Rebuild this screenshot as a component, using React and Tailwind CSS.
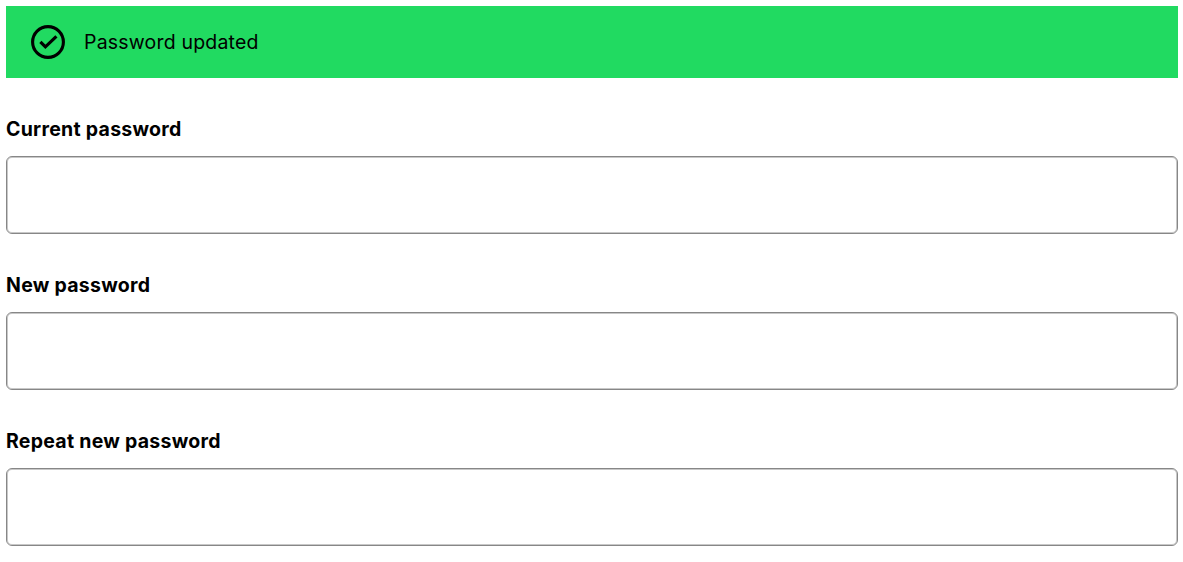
import { useState } from 'react';

const FIELDS = [
  { id: 'current', label: 'Current password' },
  { id: 'new', label: 'New password' },
  { id: 'repeat', label: 'Repeat new password' },
];

function CheckCircleIcon() {
  return (
    <svg width="34" height="34" viewBox="0 0 34 34" fill="none" stroke="black" className="shrink-0">
      <circle cx="17" cy="17" r="15.4" strokeWidth="3.1" />
      <path d="M9.4 16.8l5 5L25.4 11.4" strokeWidth="3.2" />
    </svg>
  );
}

function PasswordField({ id, label, value, onChange }) {
  return (
    <div className="flex flex-col">
      <label htmlFor={id} className="mb-[13px] text-[19.5px] leading-7 font-bold tracking-[0.27px]">
        {label}
      </label>
      <input
        id={id}
        type="password"
        value={value}
        onChange={(e) => onChange(id, e.target.value)}
        className="h-[78px] w-full rounded-md border border-[#878787] bg-white px-5 text-xl inset-shadow-[0_0_0_1px_#c8c8c8] outline-none"
      />
    </div>
  );
}

export default function App() {
  const [values, setValues] = useState({ current: '', new: '', repeat: '' });

  function handleChange(id, value) {
    setValues((prev) => ({ ...prev, [id]: value }));
  }

  return (
    <main className="h-[562px] bg-white pt-1.5 pr-[5px] pl-1.5 font-['Inter',sans-serif] text-black">
      {/* Success banner */}
      <div className="flex h-[72px] items-center gap-[19px] bg-[#21da61] pl-[25px]" role="status">
        <CheckCircleIcon />
        <span className="text-[19.5px] leading-7 tracking-[0.19px]">Password updated</span>
      </div>

      {/* Form */}
      <form className="mt-[37px] flex flex-col gap-[37px]">
        {FIELDS.map((field) => (
          <PasswordField
            key={field.id}
            {...field}
            value={values[field.id]}
            onChange={handleChange}
          />
        ))}
      </form>
    </main>
  );
}
